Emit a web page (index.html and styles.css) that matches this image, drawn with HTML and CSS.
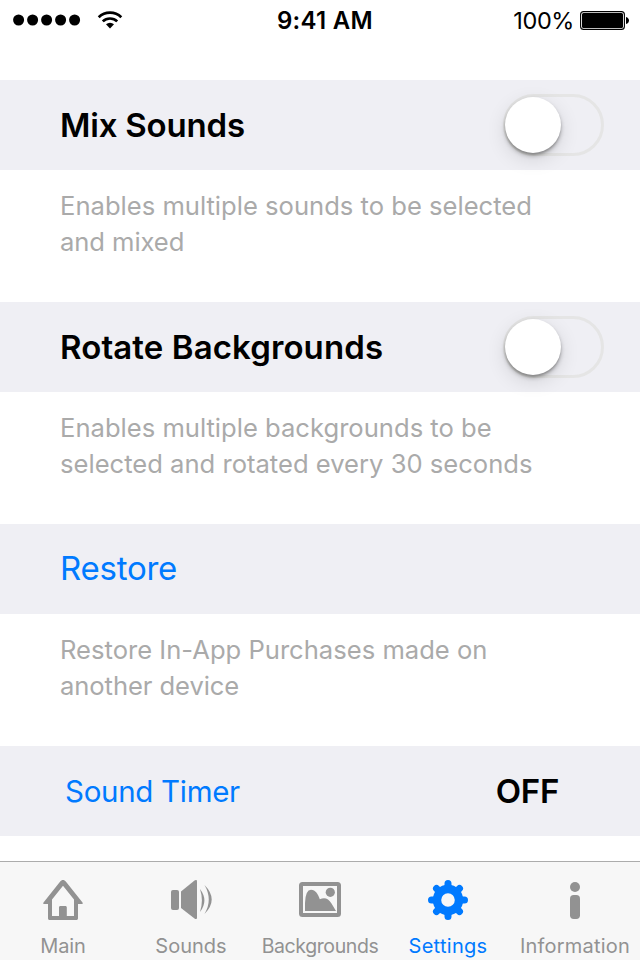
FILE: index.html
```html
<!DOCTYPE html>
<html lang="en">
<head>
<meta charset="utf-8">
<title>Settings</title>
<link rel="stylesheet" href="styles.css">
</head>
<body>
<div class="screen">
  <header class="status">
    <div class="signal">
      <svg class="dots" width="68" height="12" viewBox="0 0 68 12"><circle cx="5.6" cy="6" r="5.5"/><circle cx="19.6" cy="6" r="5.5"/><circle cx="33.6" cy="6" r="5.5"/><circle cx="47.6" cy="6" r="5.5"/><circle cx="61.6" cy="6" r="5.5"/></svg>
      <svg class="wifi" width="26" height="20" viewBox="0 0 26 20"><path d="M1.7 7.2a16.2 16.2 0 0 1 22.6 0M5.8 11.4a10.4 10.4 0 0 1 14.4 0" fill="none" stroke="#000" stroke-width="2.7"/><path d="M9 14.3a5.9 5.9 0 0 1 8 0L13 18.6z"/></svg>
    </div>
    <time class="clock">9:41 AM</time>
    <div class="power">
      <span class="percent">100%</span>
      <svg width="50" height="20" viewBox="0 0 50 20"><rect x=".6" y=".6" width="43.8" height="17.8" rx="3" fill="none" stroke="#000" stroke-width="1.1"/><rect x="2" y="2" width="41" height="15" rx="1.5"/><path d="M46 6c4 1 4 6 0 7z"/></svg>
    </div>
  </header>
  <main class="settings">
    <section class="row"><h2 class="title mix">Mix Sounds</h2><span class="switch"><span class="knob"></span></span></section>
    <p class="note">Enables multiple sounds to be selected<br><span class="short">and mixed</span></p>
    <section class="row"><h2 class="title">Rotate Backgrounds</h2><span class="switch"><span class="knob"></span></span></section>
    <p class="note">Enables multiple backgrounds to be<br>selected and rotated every 30 seconds</p>
    <section class="row"><a class="restore">Restore</a></section>
    <p class="note">Restore In-App Purchases made on<br><span class="short">another device</span></p>
    <section class="row timer-row"><a class="timer">Sound Timer</a><strong class="off">OFF</strong></section>
  </main>
  <nav class="tabs">
    <a class="tab"><svg width="44" height="44" viewBox="0 0 44 44"><path d="M25 3.8c-1.8-2.3-4.2-2.3-6 0L2.5 24.5c-.5.8-.2 1.5.5 1.5h4v14.2c0 1.2.6 1.8 1.8 1.8h26.4c1.2 0 1.8-.6 1.8-1.8V26h4c.7 0 1-.7.5-1.5zM22 7.7 33 21.5V38h-7.2v-8.5c0-1-.6-1.5-1.5-1.5h-4.8c-.9 0-1.5.5-1.5 1.5V38H11V21.5z" fill-rule="evenodd"/></svg><span class="main-label">Main</span></a>
    <a class="tab"><svg width="44" height="44" viewBox="0 0 44 44"><rect x="2" y="12" width="8" height="20" rx="2"/><path d="M12 13.5 25.5 2.5c1.3-1 2.5-.5 2.5.8v36.4c0 1.3-1.2 1.8-2.5.8L12 30z"/><path d="M31 11q8.8 11.5 0 23 3.8-11.5 0-23zM35.5 7q14.4 14.5 0 29 8.5-14.5 0-29z"/></svg><span>Sounds</span></a>
    <a class="tab"><svg width="44" height="44" viewBox="0 0 44 44"><rect x="3" y="6" width="38" height="31" rx="1.5" fill="none" stroke="currentColor" stroke-width="4"/><circle cx="32.3" cy="14.3" r="4.6"/><path d="M7 33V25q.5-13.2 6-13.2C17.5 12 20 16 21.8 21.3q7-3.5 11.7 4.2L38 33z"/></svg><span class="backgrounds-label">Backgrounds</span></a>
    <a class="tab active"><svg width="44" height="44" viewBox="0 0 44 44"><g fill="none" stroke="currentColor"><circle cx="22" cy="22" r="11" stroke-width="8.4"/><path d="M22 8V5.5M22 36v2.5M8 22H5.5M36 22h2.5M12 12l-1.5-1.5M32 12l1.5-1.5M12 32l-1.5 1.5M32 32l1.5 1.5" stroke-width="7" stroke-linecap="round"/></g></svg><span class="settings-label">Settings</span></a>
    <a class="tab"><svg width="44" height="44" viewBox="0 0 44 44"><circle cx="22" cy="9" r="5"/><rect x="17" y="17" width="10" height="24" rx="3.7"/></svg><span class="information-label">Information</span></a>
  </nav>
</div>
</body>
</html>
```
FILE: styles.css
```css
* { box-sizing: border-box; }
body { margin: 0; background: #fff; font-family: Inter, "Liberation Sans", sans-serif; color: #000; }
.screen { width: 640px; height: 960px; overflow: hidden; display: flex; flex-direction: column; }
svg { display: block; fill: currentColor; flex: none; }
.status { height: 80px; padding: 0 10px 0 13px; display: grid; grid-template-columns: 264px 1fr auto; align-items: start; font-size: 24px; line-height: 40px; }
.signal { display: flex; gap: 16px; align-items: center; height: 40px; }
.clock { font-weight: 600; font-size: 24px; letter-spacing: .25px; padding-top: 1px; white-space: nowrap; }
.power { display: flex; justify-content: flex-end; align-items: center; gap: 7px; height: 42px; }
.percent { font-size: 23.5px; letter-spacing: -.4px; }
.power svg { margin-left: -1px; }
.settings { flex: 1; }
.row { height: 90px; padding: 0 36px 0 60px; background: #efeff4; display: flex; align-items: center; justify-content: space-between; }
.title { margin: 0; font-weight: 600; font-size: 33px; line-height: 40px; letter-spacing: .1px; padding-bottom: 1px; white-space: nowrap; }
.mix { letter-spacing: -.2px; }
.switch { width: 101px; height: 62px; border: 3px solid #e5e5e5; border-radius: 31px; }
.knob { display: block; width: 56px; height: 56px; border-radius: 50%; margin-left: -1px; background: #fff; box-shadow: 0 3px 4px rgba(0,0,0,.25), 0 2px 2px rgba(0,0,0,.16), 0 6px 20px rgba(0,0,0,.12); }
.note { margin: 0; height: 132px; padding: 18px 40px 0 60px; font-size: 25.6px; line-height: 36px; color: #aaa; letter-spacing: 0; white-space: nowrap; }
.short { letter-spacing: -.08px; }
.restore, .timer { color: #007aff; }
.restore { font-size: 33px; line-height: 40px; letter-spacing: -.25px; padding-bottom: 2px; }
.timer-row { padding: 0 81px 0 65px; }
.timer { font-size: 29.5px; letter-spacing: -.3px; padding-bottom: 1px; }
.off { font-weight: 600; font-size: 33px; letter-spacing: -.3px; }
.tabs { height: 99px; border-top: 1px solid #acacac; background: #f7f7f7; display: grid; grid-template-columns: 126px 130px 128px 128px 126px; color: #929292; font-size: 20px; line-height: 24px; }
.tab { display: flex; flex-direction: column; align-items: center; padding-top: 16px; gap: 12px; white-space: nowrap; }
.main-label { letter-spacing: -.1px; }
.backgrounds-label { font-size: 19.5px; letter-spacing: -.4px; }
.settings-label { letter-spacing: .3px; }
.information-label { letter-spacing: .2px; }
.active { color: #007aff; }
```
